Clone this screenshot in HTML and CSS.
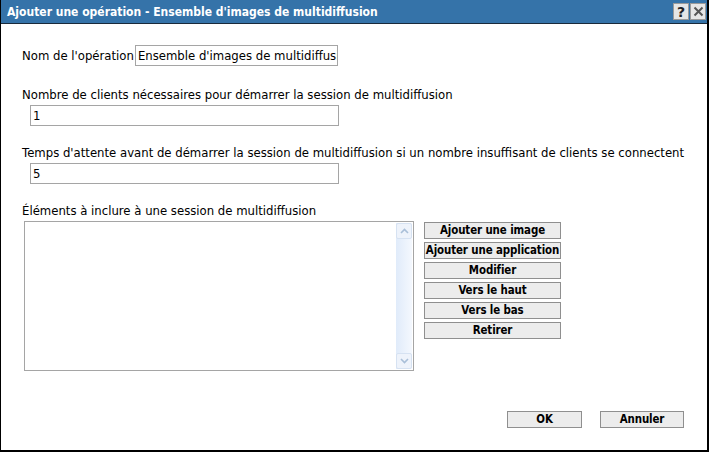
FILE: index.html
```html
<!DOCTYPE html>
<html lang="fr">
<head>
<meta charset="utf-8">
<link rel="stylesheet" href="styles.css">
</head>
<body>
<div class="dialog">
  <div class="titlebar">
    <span class="title">Ajouter une opération - Ensemble d'images de multidiffusion</span>
    <div class="tb-buttons">
      <span class="tb-btn">?</span>
      <span class="tb-btn close">
        <svg width="11" height="11" viewBox="0 0 11 11"><path d="M1.5 1.5 L9.5 9.5 M9.5 1.5 L1.5 9.5" stroke="#555" stroke-width="2"/></svg>
      </span>
    </div>
  </div>
  <div class="content">
    <div class="row-inline">
      <label class="lbl">Nom de l'opération</label>
      <div class="field name-field">Ensemble d'images de multidiffusion</div>
    </div>
    <div class="group g2">
      <label class="lbl">Nombre de clients nécessaires pour démarrer la session de multidiffusion</label>
      <div class="field wide">1</div>
    </div>
    <div class="group g3">
      <label class="lbl">Temps d'attente avant de démarrer la session de multidiffusion si un nombre insuffisant de clients se connectent</label>
      <div class="field wide">5</div>
    </div>
    <div class="group g4">
      <label class="lbl">Éléments à inclure à une session de multidiffusion</label>
      <div class="list-row">
        <div class="listbox">
          <div class="scrollbar">
            <div class="sb-btn">
              <svg width="9" height="6" viewBox="0 0 9 6"><path d="M1 5 L4.5 1.5 L8 5" fill="none" stroke="#a9bfd8" stroke-width="1.6"/></svg>
            </div>
            <div class="sb-track"></div>
            <div class="sb-btn">
              <svg width="9" height="6" viewBox="0 0 9 6"><path d="M1 1 L4.5 4.5 L8 1" fill="none" stroke="#a9bfd8" stroke-width="1.6"/></svg>
            </div>
          </div>
        </div>
        <div class="side-buttons">
          <button class="btn">Ajouter une image</button>
          <button class="btn">Ajouter une application</button>
          <button class="btn">Modifier</button>
          <button class="btn">Vers le haut</button>
          <button class="btn">Vers le bas</button>
          <button class="btn">Retirer</button>
        </div>
      </div>
    </div>
    <div class="footer">
      <button class="btn ok">OK</button>
      <button class="btn cancel">Annuler</button>
    </div>
  </div>
</div>
</body>
</html>
```

FILE: styles.css
```css
html, body {
  margin: 0;
  padding: 0;
  background: #fff;
}
.dialog {
  width: 709px;
  height: 452px;
  box-sizing: border-box;
  border-left: 1px solid #000;
  border-right: 2px solid #000;
  border-bottom: 2px solid #000;
  display: flex;
  flex-direction: column;
  font-family: "DejaVu Sans", sans-serif;
  font-size: 12px;
  color: #000;
}
.titlebar {
  height: 23px;
  background: #3573a9;
  border-bottom: 1px solid #1a2a3a;
  display: flex;
  align-items: center;
  justify-content: space-between;
  padding-left: 6px;
  padding-right: 1px;
}
.title {
  color: #fff;
  font-family: "DejaVu Sans Condensed", "DejaVu Sans", sans-serif;
  font-weight: bold;
  font-size: 12px;
}
.tb-buttons {
  display: flex;
  gap: 1px;
}
.tb-btn {
  width: 16px;
  height: 17px;
  background: #e6e6e6;
  border: 1px solid #9a9a9a;
  box-sizing: border-box;
  display: flex;
  align-items: center;
  justify-content: center;
  font-weight: bold;
  font-size: 14px;
  color: #222;
}
.content {
  flex: 1;
  display: flex;
  flex-direction: column;
  padding: 21px 0 0 21px;
}
.row-inline {
  display: flex;
  align-items: center;
  gap: 1px;
}
.lbl {
  white-space: nowrap;
  font-size: 11.7px;
}
.field {
  box-sizing: border-box;
  height: 21px;
  border: 1px solid #a5a5a5;
  padding: 1px 2px 0 2px;
  font-size: 11.7px;
  line-height: 18px;
  white-space: nowrap;
  overflow: hidden;
}
.name-field {
  width: 203px;
}
.group {
  display: flex;
  flex-direction: column;
  gap: 3px;
}
.g2 { margin-top: 22px; }
.g3 { margin-top: 20px; }
.g4 { margin-top: 20px; }
.wide {
  margin-left: 8px;
  width: 309px;
}
.list-row {
  display: flex;
  align-items: flex-start;
  gap: 10px;
  margin-left: 2px;
}
.listbox {
  width: 390px;
  height: 150px;
  box-sizing: border-box;
  border: 1px solid #a5a5a5;
  display: flex;
  justify-content: flex-end;
  padding: 1px;
}
.scrollbar {
  width: 16px;
  display: flex;
  flex-direction: column;
  background: linear-gradient(to right, #e0ebfa, #f4f8fe);
}
.sb-btn {
  height: 16px;
  box-sizing: border-box;
  border: 1px solid #d6e2f2;
  border-radius: 2px;
  background: #eef3fb;
  display: flex;
  align-items: center;
  justify-content: center;
}
.sb-track { flex: 1; }
.side-buttons {
  display: flex;
  flex-direction: column;
  gap: 3px;
  padding-top: 1px;
}
.btn {
  box-sizing: border-box;
  width: 137px;
  height: 17px;
  margin: 0;
  padding: 0;
  background: #ececec;
  border: 1px solid #8f8f8f;
  border-radius: 0;
  font-family: "DejaVu Sans Condensed", "DejaVu Sans", sans-serif;
  font-weight: bold;
  font-size: 11.4px;
  letter-spacing: -0.1px;
  line-height: 15px;
  white-space: nowrap;
  color: #000;
}
.footer {
  display: flex;
  justify-content: flex-end;
  gap: 18px;
  margin-top: 40px;
  padding-right: 23px;
}
.ok { width: 75px; }
.cancel { width: 84px; }
```
